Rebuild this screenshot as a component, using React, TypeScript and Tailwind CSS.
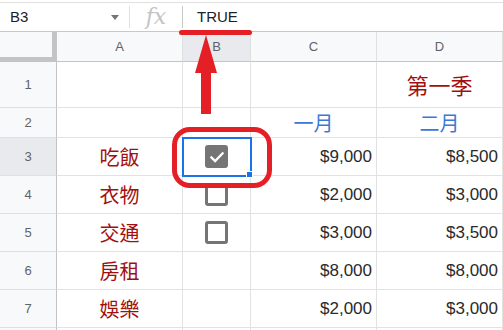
import React from "react";

const RED = "#e41f26";

function Checked() {
  return (
    <div className="w-[23px] h-[23px] rounded-[3px] bg-[#757575] flex items-center justify-center">
      <svg width="18" height="18" viewBox="0 0 24 24">
        <path d="M4.5 12.5 L9.5 17.5 L19.5 7" fill="none" stroke="white" strokeWidth="3" strokeLinecap="square" />
      </svg>
    </div>
  );
}

function Unchecked() {
  return <div className="w-[23px] h-[23px] rounded-[3px] border-[3px] border-[#757575]" />;
}

type Row = {
  n: number;
  h: string;
  a?: string;
  b?: "on" | "off";
  c?: React.ReactNode;
  d?: React.ReactNode;
  sel?: boolean;
  hideN?: boolean;
};

const rows: Row[] = [
  { n: 1, h: "h-[46px]", d: <span className="text-[22px] text-[#a10f0f] font-['Noto_Sans_CJK_TC',sans-serif]">第一季</span> },
  {
    n: 2,
    h: "h-[30px]",
    c: <span className="text-[20px] text-[#3c78d8] font-['Noto_Sans_CJK_TC',sans-serif]">一月</span>,
    d: <span className="text-[20px] text-[#3c78d8] font-['Noto_Sans_CJK_TC',sans-serif]">二月</span>,
  },
  { n: 3, h: "h-[38px]", a: "吃飯", b: "on", c: "$9,000", d: "$8,500", sel: true },
  { n: 4, h: "h-[38px]", a: "衣物", b: "off", c: "$2,000", d: "$3,000" },
  { n: 5, h: "h-[38px]", a: "交通", b: "off", c: "$3,000", d: "$3,500" },
  { n: 6, h: "h-[38px]", a: "房租", c: "$8,000", d: "$8,000" },
  { n: 7, h: "h-[38px]", a: "娛樂", c: "$2,000", d: "$3,000" },
  { n: 8, h: "h-[38px]", hideN: true },
];

export default function App() {
  return (
    <div className="relative w-[503px] h-[330px] overflow-hidden bg-white font-['Liberation_Sans',Arial,sans-serif]">
      <div className="h-[2px]" />
      {/* formula bar */}
      <div className="h-[30px] flex items-center border-t border-b border-t-[#e0e0e0] border-b-[#c8c8c8]">
        <div className="w-[129px] h-full flex items-center justify-between pl-[10px] pr-[10px]">
          <span className="text-[15px] text-[#202124]">B3</span>
          <svg width="8" height="5" viewBox="0 0 8 5">
            <path d="M0 0 L8 0 L4 5 Z" fill="#757575" />
          </svg>
        </div>
        <div className="w-px h-[22px] bg-[#e0e0e0]" />
        <div className="w-[52px] flex items-center justify-center">
          <span className="text-[22px] italic text-[#c4c4c4] font-['DejaVu_Serif',serif] leading-none">fx</span>
        </div>
        <div className="w-px h-[22px] bg-[#c8c8c8]" />
        <div className="pl-[14px] text-[15px] text-[#202124]">TRUE</div>
      </div>

      {/* column headers */}
      <div className="h-[30px] flex bg-[#f8f9fa] text-[13px] text-[#5f6368]">
        <div className="w-[57px] h-full border-r-[5px] border-b-[5px] border-[#c4c4c4]" />
        <div className="w-[126px] h-full flex items-center justify-center border-r border-b border-r-[#e0e0e0] border-b-[#c4c4c4]">A</div>
        <div className="w-[68px] h-full flex items-center justify-center bg-[#e8eaed] border-r border-b border-r-[#e0e0e0] border-b-[#c4c4c4]">B</div>
        <div className="w-[126px] h-full flex items-center justify-center border-r border-b border-r-[#e0e0e0] border-b-[#c4c4c4]">C</div>
        <div className="w-[126px] h-full flex items-center justify-center border-r border-b border-r-[#e0e0e0] border-b-[#c4c4c4]">D</div>
      </div>

      {/* rows */}
      {rows.map((r) => (
        <div key={r.n} className={`${r.h} flex`}>
          <div
            className={`w-[57px] h-full flex items-center justify-center text-[13px] text-[#5f6368] border-r border-b border-r-[#c4c4c4] border-b-[#e0e0e0] ${
              r.sel ? "bg-[#e8eaed]" : "bg-[#f8f9fa]"
            }`}
          >
            {r.hideN ? null : r.n}
          </div>
          <div className="w-[126px] h-full flex items-center justify-center border-r border-b border-[#e2e2e2] text-[20px] text-[#a10f0f] font-['Noto_Sans_CJK_TC',sans-serif]">
            {r.a}
          </div>
          <div className="w-[68px] h-full flex items-center justify-center border-r border-b border-[#e2e2e2]">
            {r.b === "on" ? <Checked /> : r.b === "off" ? <Unchecked /> : null}
          </div>
          <div
            className={`w-[126px] h-full flex items-center border-r border-b border-[#e2e2e2] text-[17px] text-[#2a2a2a] ${
              typeof r.c === "string" ? "justify-end pr-[4px]" : "justify-center"
            }`}
          >
            {r.c}
          </div>
          <div
            className={`w-[126px] h-full flex items-center border-r border-b border-[#e2e2e2] text-[17px] text-[#2a2a2a] ${
              typeof r.d === "string" ? "justify-end pr-[4px]" : "justify-center"
            }`}
          >
            {r.d}
          </div>
        </div>
      ))}

      {/* selection */}
      <div className="absolute left-[182px] top-[137px] w-[70px] h-[40px] border-2 border-[#1a73e8]" />
      <div className="absolute left-[246px] top-[171px] w-[7px] h-[7px] bg-[#1a73e8] border border-white" />

      {/* annotations */}
      <div className="absolute left-[179px] top-[30px] w-[73px] h-[5px] rounded-full" style={{ background: RED }} />
      <svg className="absolute left-[194px] top-[33px]" width="24" height="82" viewBox="0 0 24 82">
        <polygon points="12,2 1,40 23,40" fill={RED} />
        <rect x="7" y="39" width="10" height="42" fill={RED} />
      </svg>
      <div className="absolute left-[172px] top-[127px] w-[100px] h-[61px] rounded-[18px] border-[5px]" style={{ borderColor: RED }} />
    </div>
  );
}
